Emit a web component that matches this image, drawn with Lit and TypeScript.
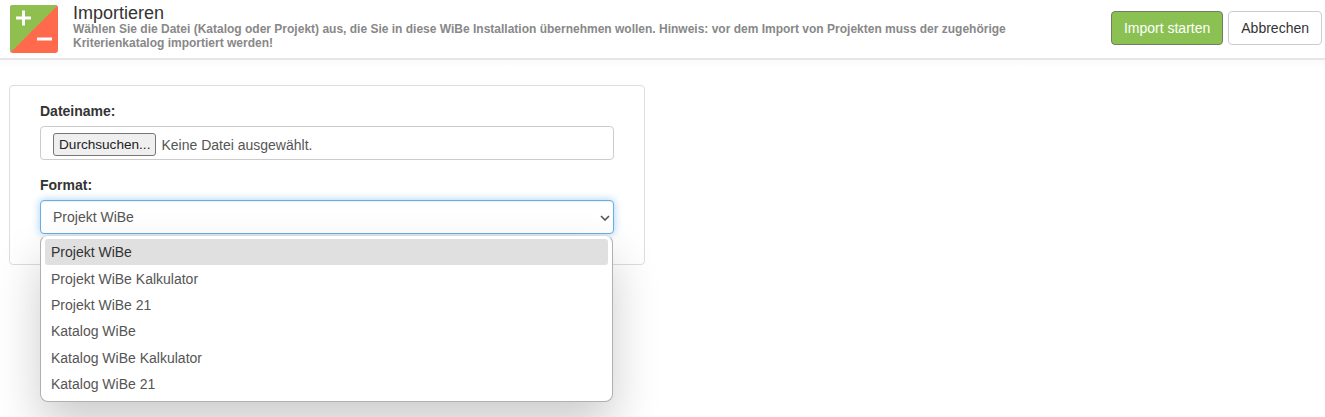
import { LitElement, html, css } from "lit";
import { customElement } from "lit/decorators.js";

const OPTIONS = [
  "Projekt WiBe",
  "Projekt WiBe Kalkulator",
  "Projekt WiBe 21",
  "Katalog WiBe",
  "Katalog WiBe Kalkulator",
  "Katalog WiBe 21",
];

@customElement("app-root")
export class AppRoot extends LitElement {
  static styles = css`
    :host {
      display: block;
      height: 417px;
      overflow: hidden;
      background: #fff;
      font-family: "Liberation Sans", Arial, sans-serif;
      color: #333;
      font-size: 14px;
    }
    .header {
      display: flex;
      align-items: flex-start;
      height: 58px;
      box-sizing: content-box;
      border-bottom: 2px solid #e6e6e6;
      padding: 0 3px 0 10px;
    }
    .logo {
      width: 48px;
      height: 48px;
      margin-top: 5px;
      flex: none;
      display: block;
    }
    .titles {
      margin-left: 15px;
      width: 945px;
      padding-top: 3px;
    }
    .title {
      font-size: 18px;
      line-height: 20px;
      color: #333;
    }
    .desc {
      font-size: 12px;
      line-height: 14px;
      margin-top: -1px;
      font-weight: bold;
      color: #888;
    }
    .actions {
      margin-left: auto;
      display: flex;
      gap: 5px;
      padding-top: 11px;
    }
    .btn {
      height: 34px;
      box-sizing: border-box;
      border: 1px solid #ccc;
      border-radius: 4px;
      background: #fff;
      color: #333;
      font: 14px/32px "Liberation Sans", Arial, sans-serif;
      padding: 0 12px;
    }
    .btn.primary {
      background: #8bc153;
      border-color: #6f7f60;
      color: #fff;
    }
    .main {
      padding: 25px 9px 0;
      background: linear-gradient(#fafafa, #fff 8px);
    }
    .card {
      width: 636px;
      height: 180px;
      box-sizing: border-box;
      border: 1px solid #ddd;
      border-radius: 4px;
      background: #fff;
      padding: 15px 30px 0;
    }
    label {
      display: block;
      font-weight: bold;
      font-size: 14px;
      line-height: 20px;
      color: #333;
      margin-bottom: 5px;
    }
    .file {
      height: 34px;
      box-sizing: border-box;
      border: 1px solid #ccc;
      border-radius: 4px;
      display: flex;
      align-items: center;
      padding: 3px 0 0 12px;
      color: #555;
      margin-bottom: 15px;
    }
    .file-btn {
      height: 23px;
      box-sizing: border-box;
      border: 1px solid #767676;
      border-radius: 3px;
      background: #efefef;
      color: #222;
      font-size: 13.6px;
      line-height: 22px;
      padding: 0 5px;
      margin-right: 5px;
    }
    .select-wrap {
      position: relative;
    }
    .select {
      height: 34px;
      box-sizing: border-box;
      border: 1px solid #66afe9;
      border-radius: 4px;
      display: flex;
      align-items: center;
      justify-content: space-between;
      padding: 0 3px 0 12px;
      color: #555;
      box-shadow: inset 0 1px 1px rgba(0, 0, 0, 0.075), 0 0 8px rgba(102, 175, 233, 0.6);
      background: #fff;
    }
    .chev {
      width: 10px;
      height: 6px;
      display: block;
      margin-top: 2px;
    }
    .menu {
      position: absolute;
      left: 0;
      top: 35px;
      width: 573px;
      height: 167px;
      box-sizing: border-box;
      background: #fff;
      border: 1px solid #b0b0b0;
      border-top-color: #ddd;
      border-radius: 8px;
      padding: 3.2px 4px;
      box-shadow: 0 24px 48px rgba(0, 0, 0, 0.2);
    }
    .opt {
      height: 26.4px;
      line-height: 26px;
      padding: 0 6px;
      color: #555;
      border-radius: 3px;
    }
    .opt.active {
      height: 26px;
      margin-bottom: 0.4px;
      background: #e0e0e0;
      color: #333;
    }
  `;

  render() {
    return html`
      <div class="header">
        <svg class="logo" viewBox="0 0 48 48">
          <defs>
            <clipPath id="r"><rect width="48" height="48" rx="3" /></clipPath>
          </defs>
          <g clip-path="url(#r)">
            <rect width="48" height="48" fill="#ff6a4d" />
            <path d="M0 0H48L0 48Z" fill="#8fc04f" />
          </g>
          <path d="M6 13H21M13.5 5.5V20.5" stroke="#fff" stroke-width="3" fill="none" />
          <path d="M27 34H42" stroke="#fff" stroke-width="3" fill="none" />
        </svg>
        <div class="titles">
          <div class="title">Importieren</div>
          <div class="desc">
            Wählen Sie die Datei (Katalog oder Projekt) aus, die Sie in diese WiBe Installation
            übernehmen wollen. Hinweis: vor dem Import von Projekten muss der zugehörige
            Kriterienkatalog importiert werden!
          </div>
        </div>
        <div class="actions">
          <div class="btn primary">Import starten</div>
          <div class="btn">Abbrechen</div>
        </div>
      </div>
      <div class="main">
        <div class="card">
          <label>Dateiname:</label>
          <div class="file">
            <span class="file-btn">Durchsuchen...</span>
            <span>Keine Datei ausgewählt.</span>
          </div>
          <label>Format:</label>
          <div class="select-wrap">
            <div class="select">
              <span>Projekt WiBe</span>
              <svg class="chev" viewBox="0 0 10 6">
                <path d="M1 1L5 5L9 1" fill="none" stroke="#555" stroke-width="1.6" />
              </svg>
            </div>
            <div class="menu">
              ${OPTIONS.map(
                (o, i) => html`<div class="opt ${i === 0 ? "active" : ""}">${o}</div>`
              )}
            </div>
          </div>
        </div>
      </div>
    `;
  }
}
